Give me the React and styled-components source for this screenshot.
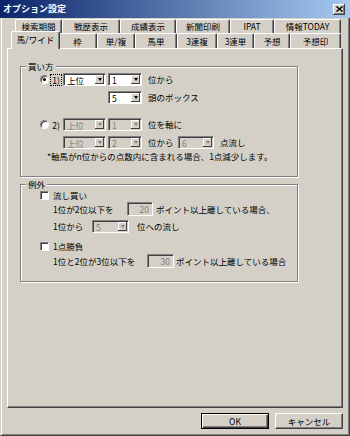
import React from "react";
import styled, { createGlobalStyle, css } from "styled-components";

const FONT = `"Noto Sans CJK JP", "Noto Sans", sans-serif`;

const GlobalStyle = createGlobalStyle`
  html, body { margin: 0; padding: 0; background: #d4d0c8; }
  * { box-sizing: border-box; }
  body { font-family: ${FONT}; font-size: 8.5px; color: #000; }
`;

const Window = styled.div`
  width: 350px;
  height: 436px;
  display: flex;
  flex-direction: column;
  background: #d4d0c8;
  overflow: hidden;
`;

const TitleBar = styled.div`
  height: 18px;
  flex: none;
  display: flex;
  align-items: center;
  justify-content: space-between;
  padding: 0 5px 0 3px;
  background: linear-gradient(to right, #0a246a, #a6caf0);
`;

const Title = styled.span`
  color: #fff;
  font-weight: bold;
  font-size: 9px;
  line-height: 18px;
`;

const CloseButton = styled.span`
  width: 12px;
  height: 11px;
  display: flex;
  align-items: center;
  justify-content: center;
  background: #d4d0c8;
  box-shadow: inset -1px -1px #404040, inset 1px 1px #fff, inset -2px -2px #808080;
`;

const Frame = styled.div`
  flex: 1;
  display: flex;
  flex-direction: column;
  border-style: solid;
  border-width: 0 1px 1px 1px;
  border-color: #d4d0c8 #404040 #404040 #d4d0c8;
  box-shadow: inset 1px 0 #fff, inset -1px -1px #808080;
  padding: 1px 6px 0;
`;

const TabRow = styled.div`
  display: flex;
  flex: none;
  height: ${(p) => p.$h}px;
  padding-left: ${(p) => p.$indent}px;
`;

const Tab = styled.div`
  width: ${(p) => p.$w}px;
  flex: none;
  display: flex;
  align-items: center;
  justify-content: center;
  background: #d4d0c8;
  border-top: 1px solid #fff;
  border-left: 1px solid #fff;
  border-right: 1px solid #404040;
  box-shadow: inset -1px 0 #808080;
  border-radius: 2px 2px 0 0;
  white-space: nowrap;
  line-height: 1;
  ${(p) =>
    p.$active &&
    css`
      position: relative;
      z-index: 1;
      align-self: flex-start;
      width: ${p.$w + 4}px;
      height: 18px;
      margin: -2px -2px 0;
      padding-bottom: 2px;
    `}
`;

const Panel = styled.div`
  flex: 1;
  display: flex;
  flex-direction: column;
  gap: 1px;
  border: 1px solid;
  border-color: #fff #404040 #404040 #fff;
  box-shadow: inset -1px -1px #808080;
  padding: 11px 0 0 12px;
`;

const Group = styled.fieldset`
  margin: 0;
  padding: 0 0 ${(p) => p.$pb}px 0;
  width: 278px;
  min-width: 0;
  border: 1px solid #808080;
  box-shadow: inset 1px 1px #fff, 1px 1px #fff;
`;

const Legend = styled.legend`
  margin-left: 5px;
  padding: 0 2px;
  height: 12px;
  line-height: 12px;
  background: #d4d0c8;
`;

const Row = styled.div`
  display: flex;
  align-items: center;
  height: ${(p) => p.$h || 13}px;
  margin-top: ${(p) => p.$mt || 0}px;
  padding-left: ${(p) => p.$indent || 0}px;
  white-space: nowrap;
`;

const Text = styled.span`
  flex: none;
  margin-left: ${(p) => p.$ml || 0}px;
  width: ${(p) => (p.$w ? `${p.$w}px` : "auto")};
  line-height: 11px;
  color: ${(p) => (p.$disabled ? "#808080" : "#000")};
`;

const Hotkey = styled.span`
  flex: none;
  width: 10px;
  margin-left: 2px;
  line-height: 10px;
  text-align: center;
  outline: ${(p) => (p.$focused ? "1px dotted #000" : "none")};
`;

const Radio = styled.span`
  width: 9px;
  height: 9px;
  flex: none;
  border-radius: 50%;
  background: #fff;
  border: 1px solid;
  border-color: #808080 #fff #fff #808080;
  box-shadow: inset 1px 1px #404040;
  display: flex;
  align-items: center;
  justify-content: center;
  &::after {
    content: "";
    width: 3px;
    height: 3px;
    border-radius: 50%;
    background: ${(p) => (p.$checked ? "#000" : "transparent")};
  }
`;

const Check = styled.span`
  width: 9px;
  height: 9px;
  flex: none;
  background: #fff;
  border: 1px solid;
  border-color: #808080 #fff #fff #808080;
  box-shadow: inset 1px 1px #404040;
`;

const ComboBox = styled.div`
  flex: none;
  width: ${(p) => p.$w}px;
  height: 13px;
  margin-left: ${(p) => p.$ml || 0}px;
  display: flex;
  align-items: stretch;
  padding: 1px;
  background: ${(p) => (p.$disabled ? "#d4d0c8" : "#fff")};
  border: 1px solid;
  border-color: #808080 #fff #fff #808080;
  box-shadow: inset 1px 1px #404040;
`;

const ComboValue = styled.span`
  flex: 1;
  padding-left: 2px;
  line-height: 10px;
  color: ${(p) => (p.$disabled ? "#808080" : "#000")};
`;

const ComboButton = styled.span`
  width: 9px;
  flex: none;
  display: flex;
  align-items: center;
  justify-content: center;
  background: #d4d0c8;
  box-shadow: inset -1px -1px #404040, inset 1px 1px #fff;
  &::after {
    content: "";
    border-left: 2.5px solid transparent;
    border-right: 2.5px solid transparent;
    border-top: 3px solid ${(p) => (p.$disabled ? "#808080" : "#000")};
  }
`;

const EditBox = styled.div`
  flex: none;
  width: ${(p) => p.$w}px;
  height: 14px;
  margin-left: ${(p) => p.$ml || 0}px;
  padding-right: 3px;
  text-align: right;
  line-height: 12px;
  color: #808080;
  background: #d4d0c8;
  border: 1px solid;
  border-color: #808080 #fff #fff #808080;
  box-shadow: inset 1px 1px #404040;
`;

const Footer = styled.div`
  flex: none;
  display: flex;
  justify-content: flex-end;
  gap: 6px;
  padding: 5px 0 6px;
`;

const Button = styled.button`
  width: ${(p) => p.$w}px;
  height: 16px;
  padding: 0;
  font-family: ${FONT};
  font-size: 8.5px;
  line-height: 1;
  color: #000;
  background: #d4d0c8;
  border: 1px solid;
  border-color: #fff #404040 #404040 #fff;
  box-shadow: inset -1px -1px #808080;
  ${(p) =>
    p.$default &&
    css`
      border-color: #000;
      box-shadow: inset 1px 1px #fff, inset -1px -1px #404040, inset -2px -2px #808080;
    `}
`;

const Combo = ({ w, ml, value, disabled }) => (
  <ComboBox $w={w} $ml={ml} $disabled={disabled}>
    <ComboValue $disabled={disabled}>{value}</ComboValue>
    <ComboButton $disabled={disabled} />
  </ComboBox>
);

const backTabs = [
  ["検索期間", 47],
  ["戦歴表示", 58],
  ["成績表示", 56],
  ["新聞印刷", 54],
  ["IPAT", 44],
  ["情報TODAY", 67],
];

const frontTabs = [
  ["馬/ワイド", 45, true],
  ["枠", 39],
  ["単/複", 38],
  ["馬単", 42],
  ["3連複", 40],
  ["3連単", 37],
  ["予想", 36],
  ["予想印", 51],
];

export default function App() {
  return (
    <>
      <GlobalStyle />
      <Window>
        <TitleBar>
          <Title>オプション設定</Title>
          <CloseButton>
            <svg width="7" height="6" viewBox="0 0 7 6">
              <path d="M0.5 0.5 L6.5 5.5 M6.5 0.5 L0.5 5.5" stroke="#000" strokeWidth="1.4" />
            </svg>
          </CloseButton>
        </TitleBar>
        <Frame>
          <TabRow $h={14} $indent={8}>
            {backTabs.map(([label, w]) => (
              <Tab key={label} $w={w}>
                {label}
              </Tab>
            ))}
          </TabRow>
          <TabRow $h={15} $indent={6}>
            {frontTabs.map(([label, w, active]) => (
              <Tab key={label} $w={w} $active={active}>
                {label}
              </Tab>
            ))}
          </TabRow>
          <Panel>
            <Group $pb={14}>
              <Legend>買い方</Legend>
              <Row $mt={1} $indent={19}>
                <Radio $checked />
                <Hotkey $focused>1)</Hotkey>
                <Combo w={43} ml={2} value="上位" />
                <Combo w={34} ml={2} value="1" />
                <Text $ml={6}>位から</Text>
              </Row>
              <Row $mt={5} $indent={87}>
                <Combo w={34} value="5" />
                <Text $ml={6}>頭のボックス</Text>
              </Row>
              <Row $mt={14} $indent={19}>
                <Radio />
                <Hotkey>2)</Hotkey>
                <Combo w={43} ml={2} value="上位" disabled />
                <Combo w={34} ml={2} value="1" disabled />
                <Text $ml={6}>位を軸に</Text>
              </Row>
              <Row $mt={5} $indent={42}>
                <Combo w={43} value="上位" disabled />
                <Combo w={34} ml={2} value="2" disabled />
                <Text $ml={6} $w={30}>位から</Text>
                <Combo w={36} value="6" disabled />
                <Text $ml={6}>点流し</Text>
              </Row>
              <Row $mt={2} $h={11} $indent={26}>
                <Text>*軸馬がn位からの点数内に含まれる場合、1点減少します。</Text>
              </Row>
            </Group>
            <Group $pb={13}>
              <Legend>例外</Legend>
              <Row $mt={0} $h={11} $indent={19}>
                <Check />
                <Text $ml={4}>流し買い</Text>
              </Row>
              <Row $mt={1} $h={14} $indent={32}>
                <Text $w={74}>1位が2位以下を</Text>
                <EditBox $w={26}>20</EditBox>
                <Text $ml={3}>ポイント以上離している場合、</Text>
              </Row>
              <Row $mt={4} $indent={32}>
                <Text $w={39}>1位から</Text>
                <Combo w={37} value="5" disabled />
                <Text $ml={8}>位への流し</Text>
              </Row>
              <Row $mt={8} $h={11} $indent={19}>
                <Check />
                <Text $ml={4}>1点勝負</Text>
              </Row>
              <Row $mt={2} $h={14} $indent={32}>
                <Text $w={94}>1位と2位が3位以下を</Text>
                <EditBox $w={27}>30</EditBox>
                <Text $ml={2}>ポイント以上離している場合</Text>
              </Row>
            </Group>
          </Panel>
          <Footer>
            <Button $w={68} $default>
              OK
            </Button>
            <Button $w={68}>キャンセル</Button>
          </Footer>
        </Frame>
      </Window>
    </>
  );
}
